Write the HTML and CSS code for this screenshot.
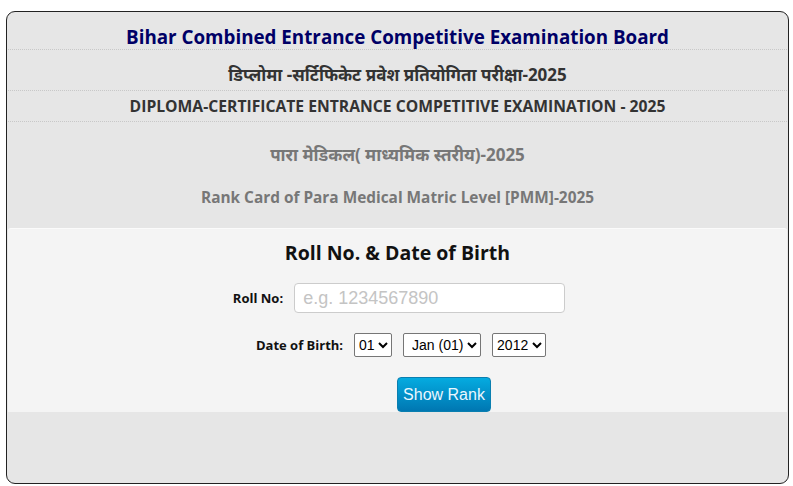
FILE: index.html
```html
<!DOCTYPE html>
<html lang="hi">
<head>
<meta charset="utf-8">
<title>BCECEB Rank Card</title>
<link rel="stylesheet" href="styles.css">
</head>
<body>
<div class="board">
  <div class="row row-title">Bihar Combined Entrance Competitive Examination Board</div>
  <div class="row row-hindi">डिप्लोमा -सर्टिफिकेट प्रवेश प्रतियोगिता परीक्षा-2025</div>
  <div class="row row-eng">DIPLOMA-CERTIFICATE ENTRANCE COMPETITIVE EXAMINATION - 2025</div>
  <div class="sub">
    <div class="sub-hindi">पारा मेडिकल( माध्यमिक स्तरीय)-2025</div>
    <div class="sub-eng">Rank Card of Para Medical Matric Level [PMM]-2025</div>
  </div>
  <form class="panel">
    <h2 class="panel-title">Roll No. &amp; Date of Birth</h2>
    <div class="field field-roll">
      <label class="label" for="roll">Roll No:</label>
      <input class="input" id="roll" type="text" placeholder="e.g. 1234567890">
    </div>
    <div class="field field-dob">
      <span class="label">Date of Birth:</span>
      <select class="sel"><option>01</option></select>
      <select class="sel sel-month"><option>Jan (01)</option></select>
      <select class="sel"><option>2012</option></select>
    </div>
    <div class="actions">
      <button class="btn" type="button">Show Rank</button>
    </div>
  </form>
</div>
</body>
</html>
```

FILE: styles.css
```css
html, body {
  margin: 0;
  padding: 0;
  background: #fff;
}
body {
  font-family: "Open Sans", "Noto Sans", "DejaVu Sans", sans-serif;
}
.board {
  box-sizing: border-box;
  margin: 11px 0 0 6px;
  width: 783px;
  height: 473px;
  border: 1px solid #222;
  border-radius: 9px;
  background: #e6e6e6;
  padding: 0 1px;
  display: flex;
  flex-direction: column;
}
.row {
  box-sizing: border-box;
  text-align: center;
  font-weight: 700;
  border-bottom: 1px dotted #c8c8c8;
  display: flex;
  align-items: center;
  justify-content: center;
}
.row-title {
  height: 38px;
  color: #000066;
  font-size: 18.8px;
  padding-top: 12px;
}
.row-hindi {
  height: 41px;
  color: #333;
  font-size: 17px;
  padding-top: 8px;
}
.row-eng {
  height: 31px;
  color: #333;
  font-size: 15.7px;
}
.sub {
  height: 106px;
  color: #777;
  font-weight: 700;
  text-align: center;
  display: flex;
  flex-direction: column;
  align-items: center;
}
.sub-hindi {
  font-size: 17px;
  margin-top: 22px;
  line-height: 22px;
}
.sub-eng {
  font-size: 15.4px;
  margin-top: 22px;
  line-height: 20px;
}
.panel {
  height: 184px;
  box-sizing: border-box;
  background: #f4f4f4;
  border-top: 1px solid #fbfbfb;
  border-radius: 3px 3px 0 0;
  display: flex;
  flex-direction: column;
  align-items: center;
  margin: 0;
}
.panel-title {
  margin: 11px 0 0;
  font-size: 19.5px;
  line-height: 26px;
  color: #111;
  font-weight: 700;
}
.field {
  display: flex;
  align-items: center;
}
.label {
  font-size: 13px;
  font-weight: 700;
  color: #111;
}
.field-roll {
  margin-top: 17px;
  margin-left: 3px;
  gap: 11px;
}
.input {
  box-sizing: border-box;
  width: 271px;
  height: 30px;
  border: 1px solid #ccc;
  border-radius: 4px;
  background: #fff;
  padding: 0 8px;
  font-family: "Liberation Sans", Arial, sans-serif;
  font-size: 18px;
  color: #333;
}
.input::placeholder {
  color: #c4c4c4;
}
.field-dob {
  margin-top: 20px;
  margin-left: 7px;
  gap: 11px;
}
.sel {
  box-sizing: border-box;
  height: 24px;
  border: 1px solid #767676;
  border-radius: 2px;
  background: #fff;
  font-family: "Liberation Sans", Arial, sans-serif;
  font-size: 14px;
  color: #000;
}
.sel-month {
  padding-left: 4px;
}
.actions {
  margin-top: auto;
  margin-left: 93px;
}
.btn {
  display: block;
  width: 94px;
  height: 35px;
  border: 1px solid #0a7fb0;
  border-radius: 4px;
  background: linear-gradient(#05abe0, #0077b2);
  color: #eaf7ff;
  font-family: "Liberation Sans", Arial, sans-serif;
  font-size: 16px;
  padding: 0;
}
```
